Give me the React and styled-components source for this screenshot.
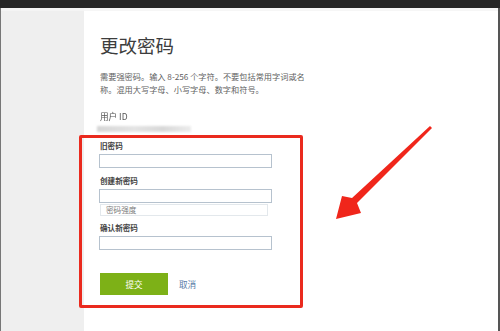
import React from "react"
import styled, { createGlobalStyle } from "styled-components"

const GlobalStyle = createGlobalStyle`
	html, body {
		margin: 0;
		padding: 0;
		background: #ffffff;
	}
	body {
		font-family: "Noto Sans CJK SC", "Noto Sans", sans-serif;
	}
`

const Page = styled.div`
	position: relative;
	width: 500px;
	height: 331px;
	overflow: hidden;
	display: flex;
	flex-direction: column;
	background: #ffffff;
`

const TopBar = styled.div`
	height: 8px;
	background: #262626;
	flex-shrink: 0;
`

const Body = styled.div`
	flex: 1;
	display: flex;
	border-left: 1px solid #777777;
	border-right: 2px solid #555555;
`

const Sidebar = styled.div`
	width: 83px;
	flex-shrink: 0;
	background: #efefef;
	border-top: 3px solid #f4f4f4;
`

const Main = styled.main`
	flex: 1;
	display: flex;
	flex-direction: column;
	align-items: flex-start;
	padding: 25px 0 0 16px;
	border-top: 3px solid #f6f6f6;
`

const Title = styled.h1`
	margin: -2px 0 0;
	font-size: 18.5px;
	line-height: 22px;
	font-weight: 400;
	color: #3d3d3d;
`

const Description = styled.p`
	margin: 14px 0 0;
	width: 206px;
	font-size: 8.2px;
	line-height: 13px;
	color: #5f5f5f;
`

const UserIdLabel = styled.div`
	margin-top: 14px;
	font-size: 8.6px;
	line-height: 12px;
	color: #555555;
	filter: blur(0.6px);
`

const BlurredValue = styled.div`
	margin: 4px 0 0 -3px;
	width: 94px;
	height: 6px;
	background: linear-gradient(90deg, #d6d6d6, #e4e4e4 40%, #d8d8d8 70%, #ececec);
	filter: blur(0.8px);
`

const Highlight = styled.form`
	margin: 3px 0 0 -21px;
	width: 224px;
	box-sizing: border-box;
	border: 3px solid #ea2a1e;
	border-radius: 2px;
	padding: 3px 0 10px 17px;
	display: flex;
	flex-direction: column;
	align-items: flex-start;
`

const Label = styled.label`
	margin: ${ props => props.$gap }px 0 0 1px;
	font-size: 7.6px;
	line-height: 10px;
	font-weight: 700;
	color: #444444;
`

const Input = styled.input`
	margin: 3px 0 0;
	width: 173px;
	height: 14px;
	box-sizing: border-box;
	border: 1px solid #b6c2ce;
	padding: 0 4px;
	background: #ffffff;
	outline: none;
`

const Strength = styled.div`
	margin: 1px 0 0 1px;
	width: 168px;
	height: 12px;
	box-sizing: border-box;
	border: 1px solid #e3e8ec;
	padding-left: 5px;
	font-size: 7.6px;
	line-height: 10px;
	color: #7a7a7a;
`

const Actions = styled.div`
	margin: 23px 0 0 1px;
	display: flex;
	align-items: center;
	gap: 11px;
`

const SubmitButton = styled.button`
	width: 68px;
	height: 22px;
	border: none;
	background: #7db117;
	color: #ffffff;
	font-family: inherit;
	font-size: 8.6px;
	padding: 0;
	cursor: pointer;
`

const CancelLink = styled.a`
	font-size: 8.6px;
	color: #5a7da8;
	text-decoration: none;
`

const Arrow = styled.svg`
	position: absolute;
	left: 0;
	top: 0;
	pointer-events: none;
`

const App = () => {
	return (
		<>
			<GlobalStyle/>
			<Page>
				<TopBar/>
				<Body>
					<Sidebar/>
					<Main>
						<Title>更改密码</Title>
						<Description>
							需要强密码。输入 8-256 个字符。不要包括常用字词或名称。混用大写字母、小写字母、数字和符号。
						</Description>
						<UserIdLabel>用户 ID</UserIdLabel>
						<BlurredValue/>
						<Highlight onSubmit={ (e) => e.preventDefault() }>
							<Label $gap={ 0 }>旧密码</Label>
							<Input type="password"/>
							<Label $gap={ 8 }>创建新密码</Label>
							<Input type="password"/>
							<Strength>密码强度</Strength>
							<Label $gap={ 7 }>确认新密码</Label>
							<Input type="password"/>
							<Actions>
								<SubmitButton type="submit">提交</SubmitButton>
								<CancelLink href="#">取消</CancelLink>
							</Actions>
						</Highlight>
					</Main>
				</Body>
				<Arrow width="500" height="331" viewBox="0 0 500 331">
					<polygon
						points="430,126 432,128 357,203 361,213 336,219 342,196 352,198"
						fill="#f0261b"
					/>
				</Arrow>
			</Page>
		</>
	)
}

export default App
